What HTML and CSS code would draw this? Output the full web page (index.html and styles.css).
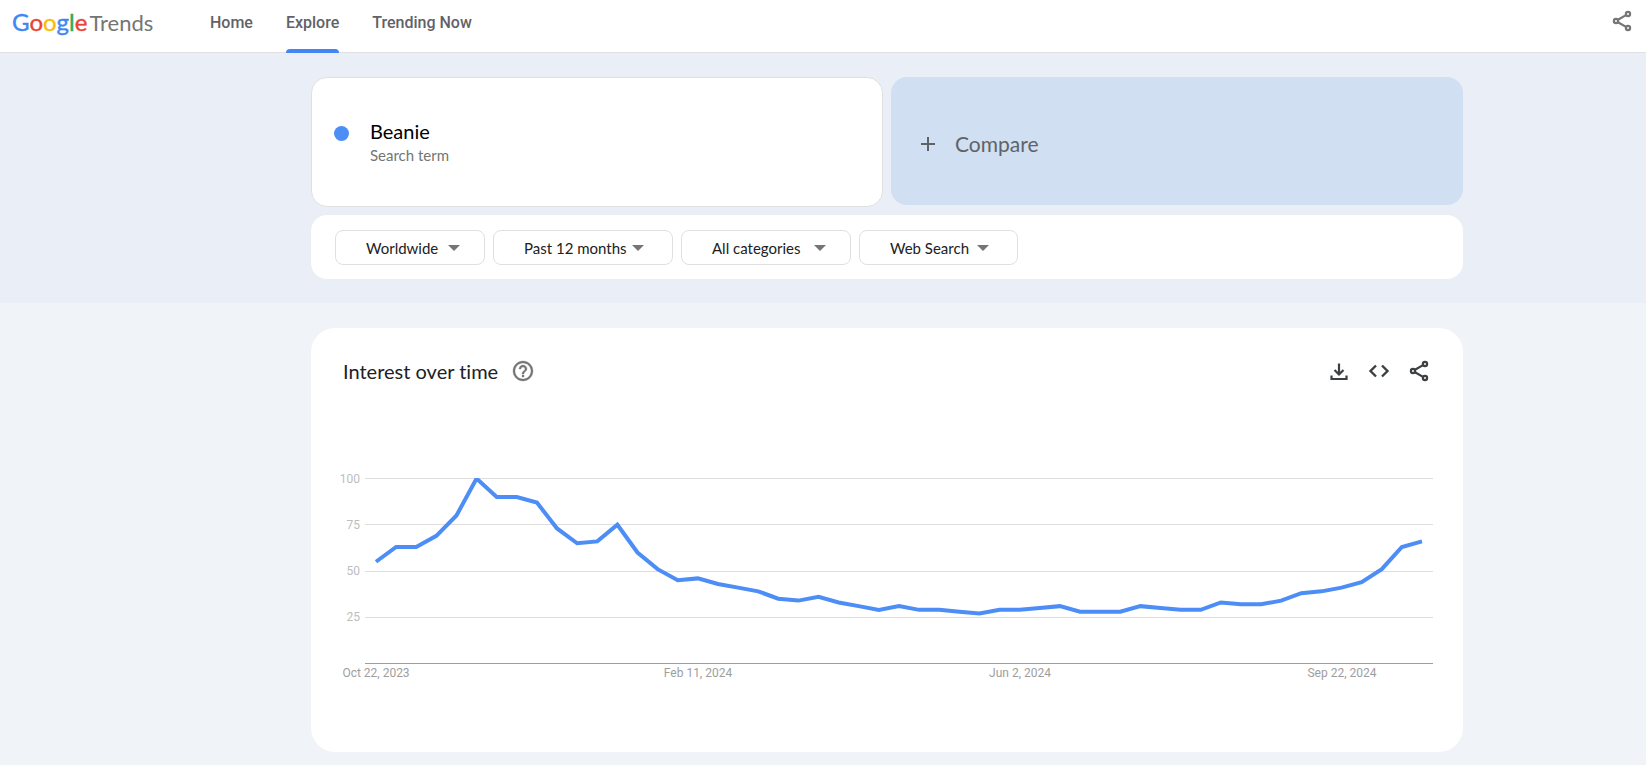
FILE: index.html
```html
<!DOCTYPE html>
<html lang="en">
<head>
<meta charset="utf-8">
<title>Beanie - Explore - Google Trends</title>
<link rel="stylesheet" href="styles.css">
</head>
<body>
<svg class="sprite" aria-hidden="true">
  <symbol id="share" viewBox="0 0 24 24">
    <g fill="none" stroke="currentColor" stroke-width="2.200">
      <circle cx="18" cy="5" r="2.1"/><circle cx="6" cy="12" r="2.1"/><circle cx="18" cy="19" r="2.1"/>
      <path d="M8 10.8l8-4.700M8 13.2l8 4.700"/>
    </g>
  </symbol>
</svg>
<header class="topbar">
  <a class="logo" href="#"><span class="google"><span class="blue">G</span><span class="red">o</span><span class="yellow">o</span><span class="blue">g</span><span class="green">l</span><span class="red">e</span></span><span class="product">Trends</span></a>
  <nav class="nav">
    <a class="nav-link" href="#">Home</a>
    <a class="nav-link active" href="#" aria-current="page">Explore</a>
    <a class="nav-link" href="#">Trending Now</a>
  </nav>
  <button class="icon-button top-share" aria-label="Share"><svg class="icon"><use href="#share"/></svg></button>
</header>
<main>
  <section class="band search-band">
    <div class="content">
      <div class="terms">
        <div class="term">
          <span class="dot"></span>
          <div>
            <div class="term-name">Beanie</div>
            <div class="term-type">Search term</div>
          </div>
        </div>
        <button class="compare">
          <svg class="plus" viewBox="0 0 14 14"><path d="M7 0v14M0 7h14" stroke="currentColor" stroke-width="2"/></svg>
          Compare
        </button>
      </div>
      <div class="filters">
        <div class="filter place"><select aria-label="Location"><option>Worldwide</option></select></div>
        <div class="filter tight period"><select aria-label="Time range"><option>Past 12 months</option></select></div>
        <div class="filter category"><select aria-label="Category"><option>All categories</option></select></div>
        <div class="filter tight source"><select aria-label="Search type"><option>Web Search</option></select></div>
      </div>
    </div>
  </section>
  <section class="band">
    <div class="content card">
      <div class="card-head">
        <h2 class="card-title">Interest over time</h2>
        <button class="icon-button help" aria-label="Help">
          <svg class="icon" viewBox="0 0 24 24" fill="currentColor" stroke="currentColor" stroke-width=".3"><path d="M11 18h2v-2h-2v2zm1-16C6.480 2 2 6.480 2 12s4.480 10 10 10 10-4.480 10-10S17.520 2 12 2zm0 18c-4.410 0-8-3.590-8-8s3.590-8 8-8 8 3.590 8 8-3.590 8-8 8zm0-14c-2.210 0-4 1.790-4 4h2c0-1.100.9-2 2-2s2 .9 2 2c0 2-3 1.750-3 5h2c0-2.250 3-2.500 3-5 0-2.210-1.790-4-4-4z"/></svg>
        </button>
        <div class="actions">
          <button class="icon-button" aria-label="Download CSV"><svg class="icon" viewBox="0 0 24 24" fill="none" stroke="currentColor" stroke-width="2.200"><path d="M12 4.500v11M7.500 11l4.500 4.500L16.500 11M4.500 16.500v3.500h15v-3.500"/></svg></button>
          <button class="icon-button" aria-label="Embed"><svg class="icon" viewBox="0 0 24 24" fill="none" stroke="currentColor" stroke-width="2.400"><path d="M9 6.500L3.500 12 9 17.500M15 6.500l5.500 5.500-5.500 5.500"/></svg></button>
          <button class="icon-button" aria-label="Share chart"><svg class="icon"><use href="#share"/></svg></button>
        </div>
      </div>
      <svg class="chart" viewBox="0 0 1152 302" role="img" aria-label="Interest over time for Beanie">
        <clipPath id="plot"><rect x="54" y="28" width="1068" height="186"/></clipPath>
        <path class="grid" d="M54 28.500H1122M54 74.500H1122M54 121.500H1122M54 167.500H1122"/>
        <path class="axis" d="M54 213.500H1122"/>
        <g class="y-labels"><text x="49" y="33">100</text><text x="49" y="79">75</text><text x="49" y="125">50</text><text x="49" y="171">25</text></g>
        <g class="x-labels"><text x="65" y="227">Oct 22, 2023</text><text x="387" y="227">Feb 11, 2024</text><text x="709" y="227">Jun 2, 2024</text><text x="1031" y="227">Sep 22, 2024</text></g>
        <polyline id="series" class="series" clip-path="url(#plot)"/>
      </svg>
    </div>
  </section>
</main>
<script src="chart.js"></script>
</body>
</html>
```
FILE: styles.css
```css
* { box-sizing: border-box; }
body { margin: 0; background: #f0f3f8; color: #202124; font-family: Lato, "Open Sans", sans-serif; font-variant-ligatures: none; }
button, select { font: inherit; color: inherit; border: 0; background: none; padding: 0; }
a { text-decoration: none; color: inherit; }
.sprite { display: none; }
.topbar { display: flex; align-items: stretch; height: 53px; padding: 0 12px; background: #fff; border-bottom: 1px solid #e0e0e0; }
.logo { display: flex; align-items: baseline; gap: 2px; width: 198px; line-height: 43px; color: #757575; }
.google { font-size: 24px; -webkit-text-stroke: 0.4px; }
.product { font-size: 22px; }
.blue { color: #4285f4; }
.red { color: #ea4335; }
.yellow { color: #fbbc04; }
.green { color: #34a853; }
.nav { display: flex; gap: 33px; font-family: Roboto, sans-serif; font-size: 16px; font-weight: 500; line-height: 46px; color: #5f6368; }
.nav-link { position: relative; }
.nav-link.active::after { content: ""; position: absolute; left: 0; right: 0; bottom: -1px; height: 4px; border-radius: 4px 4px 0 0; background: #4285f4; }
.icon-button { display: flex; color: #3c4043; cursor: pointer; }
.icon { width: 24px; height: 24px; }
.top-share { margin: 9px 0 0 auto; color: #757575; }
.band { display: grid; grid-template-columns: 311fr 1152fr 183fr; padding: 25px 0; }
.search-band { padding: 24px 0; background: #e9eef7; }
.content { grid-column: 2; min-width: 0; }
.terms { display: grid; grid-template-columns: 1fr 1fr; gap: 8px; align-items: start; }
.term { display: flex; align-items: center; gap: 21px; height: 130px; padding: 2px 0 0 22px; background: #fff; border: 1px solid #e0e0e0; border-radius: 16px; }
.dot { width: 15px; height: 15px; margin-bottom: 20px; border-radius: 50%; background: #4d8df6; }
.term-name { font-size: 20px; line-height: 24px; color: #000; }
.term-type { font-size: 15px; line-height: 24px; color: #757575; }
.compare { display: flex; align-items: center; gap: 20px; height: 128px; padding: 5px 0 0 30px; background: #d0dff2; border-radius: 16px; font-size: 21px; color: #5f6368; }
.plus { width: 14px; height: 14px; }
.filters { display: flex; gap: 8px; margin-top: 8px; padding: 15px 24px 14px; background: #fff; border-radius: 16px; }
.filter { display: grid; align-items: center; }
.filter select { grid-area: 1 / 1; width: 100%; height: 35px; padding-left: 30px; border: 1px solid #e0e0e0; border-radius: 8px; appearance: none; font-size: 15px; }
.filter::after { content: ""; grid-area: 1 / 1; justify-self: end; margin-right: 25px; border: 6px solid transparent; border-top-color: #757575; border-bottom: 0; pointer-events: none; }
.filter.tight::after { margin-right: 29px; }
.place { width: 150px; }
.period { width: 180px; }
.category { width: 170px; }
.source { width: 159px; }
.card { background: #fff; border-radius: 24px; }
.card-head { display: flex; align-items: center; height: 86px; padding: 0 32px; }
.card-title { margin: 0; font-size: 20px; font-weight: 400; }
.help { margin-left: 13px; color: #757575; }
.actions { display: flex; gap: 16px; margin-left: auto; }
.chart { display: block; width: 100%; margin-top: 36px; font-family: Roboto, sans-serif; font-size: 12px; }
.grid { stroke: #dedede; }
.axis { stroke: #9e9e9e; }
.y-labels { fill: #bdbdbd; text-anchor: end; }
.x-labels { fill: #9e9e9e; text-anchor: middle; }
.series { fill: none; stroke: #4d8df6; stroke-width: 4px; }
```
FILE: chart.js
```js
const values = [55, 63, 63, 69, 80, 100, 90, 90, 87, 73, 65, 66, 75, 60, 51, 45, 46, 43, 41, 39, 35, 34, 36, 33, 31, 29, 31, 29, 29, 28, 27, 29, 29, 30, 31, 28, 28, 28, 31, 30, 29, 29, 33, 32, 32, 34, 38, 39, 41, 44, 51, 63, 66];
const left = 65, right = 1111, base = 213.5, top100 = 28.5;
const step = (right - left) / (values.length - 1);
document.getElementById("series").setAttribute("points",
  values.map((v, i) => `${left + i * step},${base - v * (base - top100) / 100}`).join(" "));
```
